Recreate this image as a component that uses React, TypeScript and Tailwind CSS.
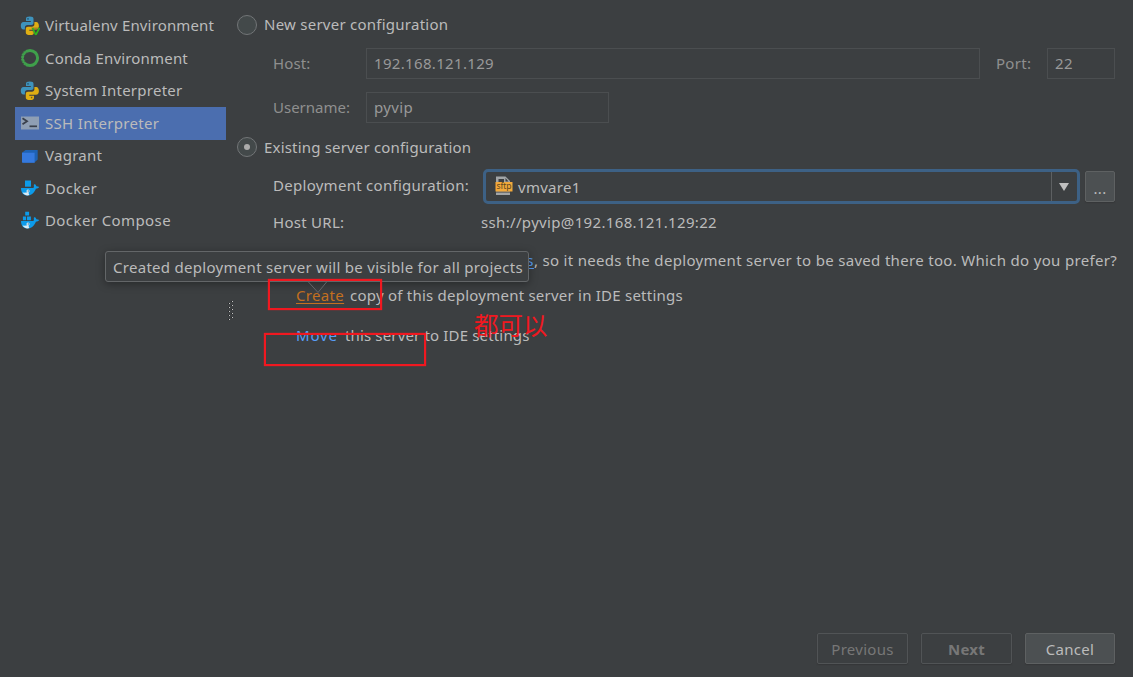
import type { ReactNode } from "react";

function PythonIcon({ venv = false }: { venv?: boolean }) {
  return (
    <svg width="20" height="20" viewBox="0 0 20 20" className="block shrink-0">
      <path
        d="M9.800.5C7 .5 6 1.300 6 2.800v2.300h4.800v.9H3.500C1.700 6 .8 7.500.8 9.700s1 3.800 2.600 3.800h1.500v-1.800c0-1.700 1-2.700 2.600-2.700h3.800c1.200 0 2.200-.8 2.200-2V2.800C13.500 1.300 12.400.5 9.800.5z"
        fill="#3e93bd"
      />
      <path
        d="M10.200 19c2.600 0 3.800-.8 3.800-2.300v-2H9.300v-.9h6.500c2.200 0 3.100-1.500 3.100-3.700s-.9-4-2.700-4h-1.800v1.900c0 1.700-1 2.700-2.500 2.700H8c-1.400 0-2.200.8-2.200 2v4c0 1.500 1.600 2.300 4.400 2.300z"
        fill="#dfae13"
      />
      <circle cx="8" cy="2.900" r=".8" fill="#25506a" />
      {!venv && <circle cx="11.600" cy="16.600" r=".8" fill="#6e5b1d" />}
      {venv && (
        <>
          <path d="M11.200 11.500h8.800v8h-6z" fill="#3c3f41" opacity=".35" />
          <path d="M12.600 12l3.200 7M16 18.600l3.400-6.600" fill="none" stroke="#2fb51c" strokeWidth="1.700" />
        </>
      )}
    </svg>
  );
}

function CondaIcon() {
  return (
    <svg width="20" height="20" viewBox="0 0 20 20" className="block shrink-0">
      <circle cx="10" cy="10" r="7.600" fill="none" stroke="#3f9f4b" strokeWidth="3" />
      <path
        d="M5.500 2.700A8.600 8.600 0 0 0 5.500 17.300"
        fill="none"
        stroke="#3c3f41"
        strokeWidth=".9"
        strokeDasharray="1.100 1.700"
      />
      <path
        d="M6.500 4.800A6.500 6.500 0 0 0 6.500 15.200"
        fill="none"
        stroke="#3c3f41"
        strokeWidth=".8"
        strokeDasharray="1 2"
      />
    </svg>
  );
}

function SshIcon() {
  return (
    <svg width="20" height="20" viewBox="0 0 20 20" className="block shrink-0">
      <path d="M1 3.500h18v13H1z" fill="#8f9fb4" />
      <path d="M2.500 5.300l4.500 3-4.500 3" fill="none" stroke="#3a404c" strokeWidth="1.800" />
      <path d="M9.500 13.300H17" stroke="#3a404c" strokeWidth="1.700" />
    </svg>
  );
}

function VagrantIcon() {
  return (
    <svg width="20" height="20" viewBox="0 0 20 20" className="block shrink-0">
      <path d="M2 6.700L5.500 4H17.700v9.500L14.500 16.500H2z" fill="#1e62b4" />
      <path d="M2 6.800h12.600v9.900H3q-1 0-1-1z" fill="#3579de" />
    </svg>
  );
}

function DockerIcon({ compose = false }: { compose?: boolean }) {
  return (
    <svg width="20" height="20" viewBox="0 0 20 20" className="block shrink-0">
      {compose ? (
        <path d="M5.200.8h3.900v3.700H5.200zM2.900 5.500h3.200v3.800H2.900zM7 5.500h3.900v3.800H7z" fill="#0d9bea" />
      ) : (
        <path d="M5 2.500h6v6.200H5z" fill="#0d9bea" />
      )}
      <path
        d="M1 10h12.300c.8-.7.7-2.100.4-3.100l1-.9c1 .6 1.500 1.400 1.700 2.300 1 0 2 .2 2.800.8-.7 1.200-1.900 1.700-3.300 1.700-1.700 4.100-4.500 6.700-8.700 6.700C3.200 17.500 1 14.500 1 10z"
        fill="#0d9bea"
      />
      <path d="M2.600 14.600c2 .3 4-.1 5.600-.7l1.200 3.400c-3.400.6-5.500-.5-6.800-2.700z" fill="#dcebf3" />
      <circle cx="8" cy="13" r="1.500" fill="#f2f8fb" />
      <circle cx="8.200" cy="13" r=".7" fill="#24628a" />
    </svg>
  );
}

function SftpIcon() {
  return (
    <svg width="18" height="20" viewBox="0 0 18 20" className="relative -top-px block shrink-0">
      <path d="M1 .5h9.500L15 5v14H1z" fill="#a2a5a7" />
      <path d="M3.500 3h5.500v3h-5.500zM10.500 2v3.500h3zM1 15.500h14v1H1z" fill="#3c3f41" />
      <path d="M.5 6H17.500v9.500H.5z" fill="#f2a93b" />
      <text x="1.500" y="13" fontSize="8.500" textLength="15" letterSpacing="0" fontFamily="Noto Sans, sans-serif" fill="#5c4620">
        sftp
      </text>
    </svg>
  );
}

const interpreters: { name: string; icon: ReactNode; tracking: string; selected?: boolean }[] = [
  { name: "Virtualenv Environment", icon: <PythonIcon venv />, tracking: "tracking-[0.15px]" },
  { name: "Conda Environment", icon: <CondaIcon />, tracking: "tracking-[0.18px]" },
  { name: "System Interpreter", icon: <PythonIcon />, tracking: "tracking-[0.25px]" },
  { name: "SSH Interpreter", icon: <SshIcon />, tracking: "tracking-[0.32px]", selected: true },
  { name: "Vagrant", icon: <VagrantIcon />, tracking: "tracking-[0.28px]" },
  { name: "Docker", icon: <DockerIcon />, tracking: "tracking-[0.35px]" },
  { name: "Docker Compose", icon: <DockerIcon compose />, tracking: "tracking-[0.41px]" },
];

function Sidebar() {
  return (
    <nav className="w-[226px] shrink-0 pt-[9.5px] pl-[15px]">
      {interpreters.map((item) => (
        <div
          key={item.name}
          className={`flex h-[32.5px] items-center gap-[5px] pl-[5px] ${item.selected ? "bg-[#4b6eaf]" : ""}`}
        >
          {item.icon}
          <span className={`pb-px ${item.tracking}`}>{item.name}</span>
        </div>
      ))}
    </nav>
  );
}

function Splitter() {
  return (
    <div className="w-[11px] shrink-0 pt-[301px] pl-[2px]">
      <svg width="6" height="19" viewBox="0 0 6 19" className="block">
        {[0, 4, 8, 12, 16].map((y) => (
          <g key={y}>
            <path d={`M3 ${y}h1v1h-1zM0 ${y + 2}h1v1h-1z`} fill="#242628" />
            <path d={`M4 ${y}h1v1h-1zM1 ${y + 2}h1v1h-1z`} fill="#c4c4c4" />
          </g>
        ))}
      </svg>
    </div>
  );
}

function Radio({ label, look, checked = false }: { label: string; look: string; checked?: boolean }) {
  return (
    <div className="flex h-5 items-center gap-[7px]">
      <span className="flex size-5 items-center justify-center rounded-full border border-[#727577] bg-[#43494a]">
        {checked && <span className="size-1.5 rounded-full bg-[#ababab]" />}
      </span>
      <span className={look}>{label}</span>
    </div>
  );
}

function Field({ value, size }: { value: string; size: string }) {
  return (
    <div
      className={`flex h-[31px] items-center border border-[#4b4e50] pb-0.5 pl-[7px] tracking-[0.33px] text-[#999999] ${size}`}
    >
      {value}
    </div>
  );
}

function Button({ children, look }: { children: ReactNode; look: string }) {
  return (
    <button className={`h-[31px] rounded-[2px] border shadow-[0_1px_1px_#353739] ${look}`}>{children}</button>
  );
}

export default function App() {
  return (
    <div className="relative flex h-[677px] w-[1133px] overflow-hidden bg-[#3c3f41] font-['Noto_Sans','Noto_Sans_CJK_SC',sans-serif] text-[15px] leading-5 tracking-[0.28px] whitespace-nowrap text-[#bbbbbb]">
      <Sidebar />
      <Splitter />
      <main className="flex min-w-0 flex-1 flex-col pt-[15px] pr-[18px] pb-[13px]">
        <Radio label="New server configuration" look="pb-0.5 tracking-[0.25px]" />
        <div className="mt-[13px] flex items-center pl-9 text-[#8f8f8f]">
          <span className="w-[93px] pb-0.5 tracking-[0.1px]">Host:</span>
          <Field value="192.168.121.129" size="w-[614px]" />
          <span className="w-[67px] pb-0.5 pl-4">Port:</span>
          <Field value="22" size="w-[68px]" />
        </div>
        <div className="mt-[13px] flex items-center pl-9 text-[#8f8f8f]">
          <span className="w-[93px] pb-0.5 tracking-normal">Username:</span>
          <Field value="pyvip" size="w-[243px]" />
        </div>
        <div className="mt-[14px]">
          <Radio label="Existing server configuration" look="tracking-[0.18px]" checked />
        </div>
        <div className="mt-3 flex items-center pl-9">
          <span className="w-[210px] pb-1">Deployment configuration:</span>
          <div className="flex h-[35px] w-[597px] items-stretch rounded-[5px] border-3 border-[#3d6185]">
            <div className="flex flex-1 items-center gap-[5px] pl-[9px]">
              <SftpIcon />
              <span>vmvare1</span>
            </div>
            <div className="flex w-[26px] items-center justify-center border-l border-[#5d6062] pr-0.5">
              <svg width="10" height="8" viewBox="0 0 10 8">
                <path d="M0 0h10L5 8z" fill="#bfbfbf" />
              </svg>
            </div>
          </div>
          <div className="ml-[5px] flex h-[31px] w-[30px] items-center justify-center rounded-[2px] border border-[#5e6162] bg-[#4c5052] pt-[3px] shadow-[0_1px_1px_#353739]">
            ...
          </div>
        </div>
        <div className="mt-2 flex pl-9">
          <span className="w-[208px]">Host URL:</span>
          <span className="tracking-[0.34px]">ssh://pyvip@192.168.121.129:22</span>
        </div>
        <p className="mt-[18px] -mr-0.5 text-right tracking-[0.315px]">
          <a className="text-[#589df6] underline underline-offset-2">s</a>, so it needs the deployment server to be saved
          there too. Which do you prefer?
        </p>
        <p className="mt-[15px] pl-[59px]">
          <a className="mr-[6px] tracking-[0.33px] text-[#c4701f] underline underline-offset-2">Create</a>
          <span className="tracking-[0.23px]">copy of this deployment server in IDE settings</span>
        </p>
        <p className="mt-5 pl-[59px]">
          <a className="mr-[7px] tracking-[0.85px] text-[#589df6]">Move</a>
          <span className="tracking-[0.16px]">this server to IDE settings</span>
        </p>
        <footer className="mt-auto flex justify-end gap-[13px]">
          <Button look="w-[91px] border-[#515456] text-[#777777]">Previous</Button>
          <Button look="w-[91px] border-[#515456] font-bold text-[#777777]">Next</Button>
          <Button look="w-[90px] border-[#5e6162] bg-[#4c5052]">Cancel</Button>
        </footer>
      </main>

      <div className="absolute top-[251px] left-[105px] flex h-[31px] w-[424px] items-center rounded-[3px] border border-[#636668] bg-[#3c3f41] pl-[7px] shadow-[0_2px_8px_rgba(0,0,0,0.35)]">
        <span className="tracking-[0.29px]">Created deployment server will be visible for all projects</span>
      </div>
      <svg width="20" height="13" viewBox="0 0 20 13" className="absolute top-[281px] left-[308px]">
        <path d="M0 .5L10 11.500L19 .5" fill="none" stroke="#636668" />
      </svg>
      <div className="absolute top-[279px] left-[268px] h-[31px] w-[114px] border-2 border-[#f01820] shadow-[0_0_1px_#f01820]" />
      <div className="absolute top-[333px] left-[264px] h-[33px] w-[162px] border-2 border-[#f01820] shadow-[0_0_1px_#f01820]" />
      <div className="absolute top-[308px] left-[474px] font-['Noto_Sans_CJK_SC',sans-serif] text-[24.5px] leading-[34px] tracking-normal text-[#f01820]">
        都可以
      </div>
    </div>
  );
}
